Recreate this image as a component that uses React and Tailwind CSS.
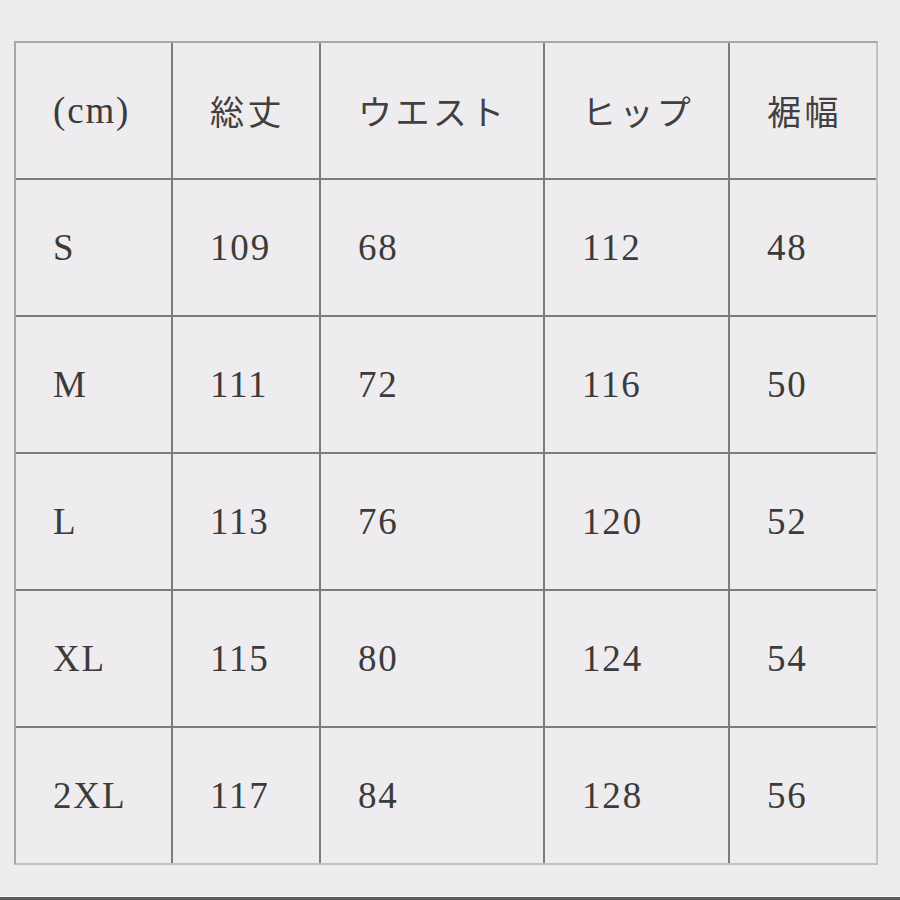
import React from "react";

const headers = ["(cm)", "総丈", "ウエスト", "ヒップ", "裾幅"];
const rows = [
  ["S", "109", "68", "112", "48"],
  ["M", "111", "72", "116", "50"],
  ["L", "113", "76", "120", "52"],
  ["XL", "115", "80", "124", "54"],
  ["2XL", "117", "84", "128", "56"],
];

function Cell({ children, jp }) {
  return (
    <div className="bg-[#eeecee] flex items-center pl-[37px] h-[135px]">
      <span
        className={
          jp
            ? "text-[34px] font-normal tracking-[0.1em] text-[#404040] [font-family:'Noto_Sans_CJK_JP',serif]"
            : "text-[37px] tracking-[0.05em] text-[#3b3b3b] [font-family:'Liberation_Serif','Noto_Sans_CJK_JP',serif]"
        }
      >
        {children}
      </span>
    </div>
  );
}

export default function App() {
  return (
    <div className="w-[900px] h-[900px] bg-[#eeecee] flex flex-col">
      <div className="flex-1 pt-[41px] pl-[14px]">
        <div className="w-[864px] border-2 border-t-[#a8a8a8] border-l-[#a8a8a8] border-r-[#c2c2c2] border-b-[#c2c2c2] bg-[#7c7c7c] grid grid-cols-[155px_146px_222px_183px_146px] gap-[2px]">
          {headers.map((h, i) => (
            <Cell key={h} jp={i > 0}>{h}</Cell>
          ))}
          {rows.map((r) =>
            r.map((v, i) => <Cell key={r[0] + i}>{v}</Cell>)
          )}
        </div>
      </div>
      <div className="h-[1px] bg-[#f7f7f7]" />
      <div className="h-[3px] bg-[#5c5c5c]" />
    </div>
  );
}
